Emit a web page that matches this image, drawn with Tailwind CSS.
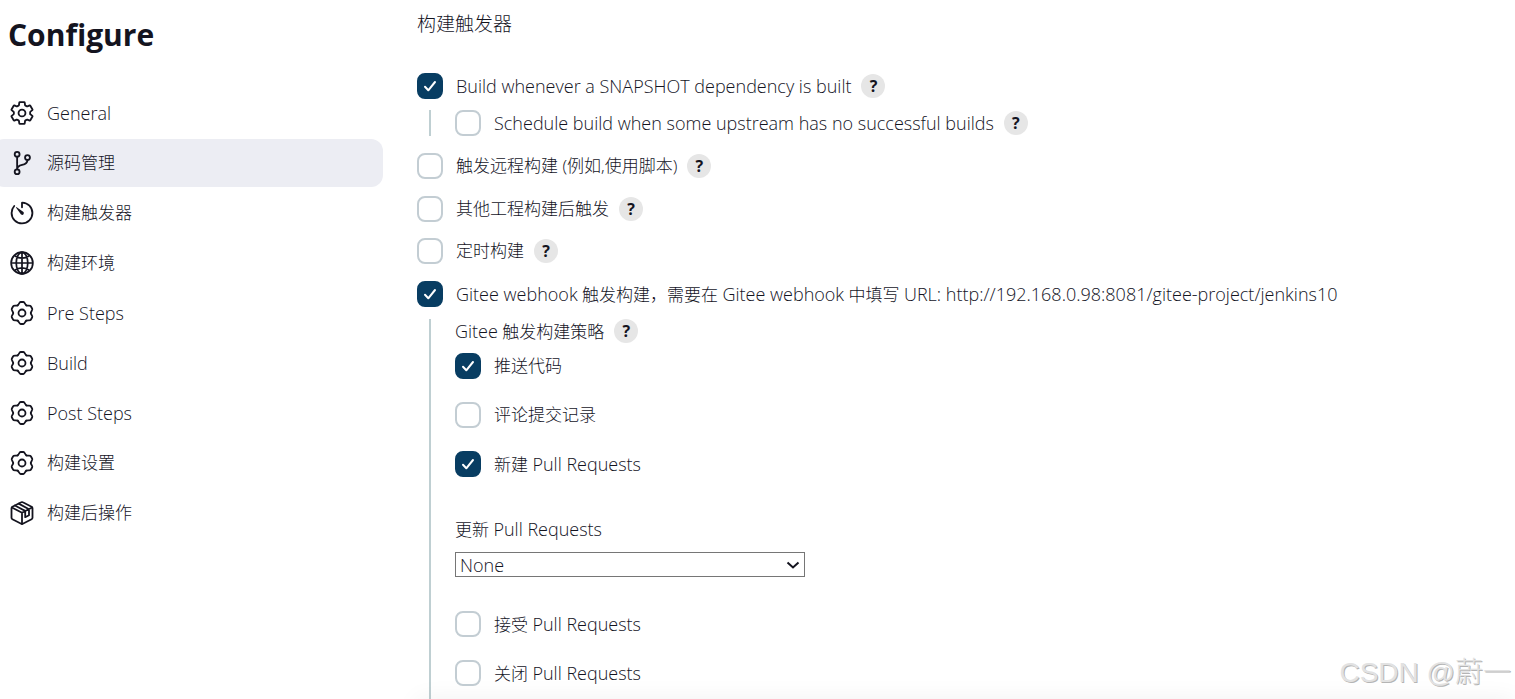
<!DOCTYPE html>
<html lang="zh-CN">
<head>
    <meta charset="UTF-8">
    <meta name="viewport" content="width=device-width, initial-scale=1.0">
    <title>Configure</title>
    <script src="https://cdn.jsdelivr.net/npm/@tailwindcss/browser@4"></script>
</head>
<body class="bg-white text-[#14141f] font-['Open_Sans','Noto_Sans_CJK_SC',sans-serif] text-[17px] leading-6 font-light">

<!-- Icon shapes -->
<svg class="hidden">
    <symbol id="icon-settings" viewBox="0 0 512 512">
        <g fill="none" stroke="currentColor" stroke-width="36" stroke-linecap="round" stroke-linejoin="round">
            <circle cx="256" cy="256" r="68"/>
            <path d="M416.39 256a154.34 154.34 0 01-1.53 20.79l45.21 35.46a10.81 10.81 0 012.45 13.75l-42.77 74a10.81 10.81 0 01-13.14 4.59l-44.9-18.08a16.11 16.11 0 00-15.17 1.75A164.48 164.48 0 01325 400.8a15.94 15.94 0 00-8.82 12.14l-6.73 47.89a11.08 11.08 0 01-10.68 9.17h-85.54a11.11 11.11 0 01-10.69-8.87l-6.72-47.82a16.07 16.07 0 00-9-12.22 155.3 155.3 0 01-21.46-12.57 16 16 0 00-15.11-1.71l-44.89 18.07a10.81 10.81 0 01-13.14-4.58l-42.77-74a10.8 10.8 0 012.45-13.75l38.21-30a16.05 16.05 0 006-14.08c-.36-4.17-.58-8.33-.58-12.5s.21-8.27.58-12.35a16 16 0 00-6.07-13.94l-38.19-30A10.81 10.81 0 0149.48 186l42.77-74a10.81 10.81 0 0113.14-4.59l44.9 18.08a16.11 16.11 0 0015.17-1.75A164.48 164.48 0 01187 111.2a15.94 15.94 0 008.82-12.14l6.73-47.89A11.08 11.08 0 01213.23 42h85.54a11.11 11.11 0 0110.69 8.87l6.72 47.82a16.07 16.07 0 009 12.22 155.3 155.3 0 0121.46 12.57 16 16 0 0015.11 1.71l44.89-18.07a10.81 10.81 0 0113.14 4.58l42.77 74a10.8 10.8 0 01-2.45 13.75l-38.21 30a16.05 16.05 0 00-6.05 14.08c.33 4.14.55 8.3.55 12.47z"/>
        </g>
    </symbol>
    <symbol id="icon-gear" viewBox="0 0 26 26">
        <g fill="none" stroke="currentColor" stroke-width="1.8" stroke-linecap="round" stroke-linejoin="round">
            <circle cx="13" cy="13" r="3.5"/>
            <path d="M8.6 5.400C10 4.600 10.200 2 11.600 2h2.800C15.800 2 16 4.600 17.400 5.400"/>
            <path transform="rotate(60 13 13)" d="M8.6 5.400C10 4.600 10.200 2 11.600 2h2.800C15.800 2 16 4.600 17.400 5.400"/>
            <path transform="rotate(120 13 13)" d="M8.6 5.400C10 4.600 10.200 2 11.600 2h2.800C15.800 2 16 4.600 17.400 5.400"/>
            <path transform="rotate(180 13 13)" d="M8.6 5.400C10 4.600 10.200 2 11.600 2h2.800C15.800 2 16 4.600 17.400 5.400"/>
            <path transform="rotate(240 13 13)" d="M8.6 5.400C10 4.600 10.200 2 11.600 2h2.800C15.800 2 16 4.600 17.400 5.400"/>
            <path transform="rotate(300 13 13)" d="M8.6 5.400C10 4.600 10.200 2 11.600 2h2.800C15.800 2 16 4.600 17.400 5.400"/>
        </g>
    </symbol>
    <symbol id="icon-branch" viewBox="0 0 512 512">
        <g fill="none" stroke="currentColor" stroke-width="36" stroke-linecap="round" stroke-linejoin="round">
            <circle cx="160" cy="84" r="48"/>
            <circle cx="160" cy="428" r="48"/>
            <circle cx="364" cy="148" r="48"/>
            <path d="M160 380V132M364 196c0 140-204 58-204 184"/>
        </g>
    </symbol>
    <symbol id="icon-timer" viewBox="0 0 512 512">
        <path fill="none" stroke="currentColor" stroke-width="36" stroke-linecap="round" stroke-linejoin="round" d="M103 118A205 205 0 0051 254c-1 114 91 207 205 207 113 0 205-92 205-205 0-112-89-203-200-205a5 5 0 00-5 5V145"/>
        <path fill="currentColor" d="M233.380 278.630l-93-127a8.130 8.130 0 0111.320-11.320l127 93a32.500 32.500 0 01-37.250 53.260 33.210 33.210 0 01-8.070-7.940z"/>
    </symbol>
    <symbol id="icon-globe" viewBox="0 0 512 512">
        <g fill="none" stroke="currentColor" stroke-width="34">
            <circle cx="256" cy="256" r="214"/>
            <path d="M256 42c-60 0-114 96-114 214s54 214 114 214 114-96 114-214S316 42 256 42zM113 113c38 28 89 46 143 46s105-18 143-46M399 399c-38-28-89-46-143-46s-105 18-143 46M256 42v428M42 256h428"/>
        </g>
    </symbol>
    <symbol id="icon-package" viewBox="0 0 26 26">
        <g fill="none" stroke="currentColor" stroke-width="1.8" stroke-linecap="round" stroke-linejoin="round">
            <path d="M12.200 2.300a1.600 1.600 0 011.600 0l8.800 4.500c.5.300.9.800.9 1.400v9.600c0 .6-.3 1.100-.9 1.400l-8.800 4.500a1.600 1.600 0 01-1.600 0l-8.800-4.500c-.5-.3-.9-.8-.9-1.400V8.200c0-.6.300-1.100.9-1.400z"/>
            <path d="M2.900 7.500L13 12.800l10.100-5.300M13 12.800V24M5.900 5.500l10.300 5.400v6.300l3.800-2V9.200L9.700 3.600"/>
        </g>
    </symbol>
</svg>

<div class="relative flex min-h-screen overflow-hidden">
    <!-- Sidebar -->
    <aside class="w-[383px] shrink-0 pt-[17px]">
        <h1 class="pl-2 text-[30px] leading-9 font-bold">Configure</h1>
        <nav class="-ml-2 mt-9 flex flex-col gap-[2px]">
            <a href="#general" class="flex h-12 items-center gap-3 rounded-xl pl-[17px] text-lg">
                <svg class="size-[26px]"><use href="#icon-settings"/></svg>General</a>
            <a href="#scm" class="flex h-12 items-center gap-3 rounded-xl bg-[#ecedf3] pl-[17px]">
                <svg class="size-[26px]"><use href="#icon-branch"/></svg>源码管理</a>
            <a href="#triggers" class="flex h-12 items-center gap-3 rounded-xl pl-[17px]">
                <svg class="size-[26px]"><use href="#icon-timer"/></svg>构建触发器</a>
            <a href="#environment" class="flex h-12 items-center gap-3 rounded-xl pl-[17px]">
                <svg class="size-[26px]"><use href="#icon-globe"/></svg>构建环境</a>
            <a href="#pre-steps" class="flex h-12 items-center gap-3 rounded-xl pl-[17px] text-lg">
                <svg class="size-[26px]"><use href="#icon-gear"/></svg>Pre Steps</a>
            <a href="#build" class="flex h-12 items-center gap-3 rounded-xl pl-[17px] text-lg">
                <svg class="size-[26px]"><use href="#icon-gear"/></svg>Build</a>
            <a href="#post-steps" class="flex h-12 items-center gap-3 rounded-xl pl-[17px] text-lg">
                <svg class="size-[26px]"><use href="#icon-gear"/></svg>Post Steps</a>
            <a href="#settings" class="flex h-12 items-center gap-3 rounded-xl pl-[17px]">
                <svg class="size-[26px]"><use href="#icon-gear"/></svg>构建设置</a>
            <a href="#post-build" class="flex h-12 items-center gap-3 rounded-xl pl-[17px]">
                <svg class="size-[26px]"><use href="#icon-package"/></svg>构建后操作</a>
        </nav>
    </aside>

    <!-- Build triggers -->
    <main class="flex min-w-0 flex-1 flex-col pl-[34px] pt-3">
        <h2 id="triggers" class="mb-[37px] text-[19px] leading-6">构建触发器</h2>

        <div class="flex h-[26px] items-center gap-[10px]">
            <label class="flex items-center gap-[13px] text-lg leading-6">
                <span class="grid size-[26px] shrink-0">
                    <input type="checkbox" checked class="peer col-start-1 row-start-1 size-[26px] appearance-none rounded-lg border-2 border-[#c3cdd3] checked:border-[#083d62] checked:bg-[#083d62]">
                    <svg class="pointer-events-none invisible col-start-1 row-start-1 size-[26px] text-white peer-checked:visible" viewBox="0 0 26 26" fill="none" stroke="currentColor" stroke-width="2" stroke-linecap="round" stroke-linejoin="round"><path d="M8 13.800l3.300 3.500L18 9"/></svg>
                </span>
                Build whenever a SNAPSHOT dependency is built
            </label>
            <button type="button" class="size-6 rounded-full bg-[#e6e6e6] text-base leading-6 font-bold">?</button>
        </div>

        <div class="ml-3 mt-[11px] border-l-2 border-[#bfcfd2] pl-6">
            <div class="flex h-[26px] items-center gap-[10px]">
                <label class="flex items-center gap-[13px] text-lg leading-6">
                    <input type="checkbox" class="size-[26px] shrink-0 appearance-none rounded-lg border-2 border-[#c3cdd3]">
                    Schedule build when some upstream has no successful builds
                </label>
                <button type="button" class="size-6 rounded-full bg-[#e6e6e6] text-base leading-6 font-bold">?</button>
            </div>
        </div>

        <div class="mt-[17px] flex h-[26px] items-center gap-[10px]">
            <label class="flex items-center gap-[13px]">
                <input type="checkbox" class="size-[26px] shrink-0 appearance-none rounded-lg border-2 border-[#c3cdd3]">
                触发远程构建 (例如,使用脚本)
            </label>
            <button type="button" class="size-6 rounded-full bg-[#e6e6e6] text-base leading-6 font-bold">?</button>
        </div>

        <div class="mt-[17px] flex h-[26px] items-center gap-[10px]">
            <label class="flex items-center gap-[13px]">
                <input type="checkbox" class="size-[26px] shrink-0 appearance-none rounded-lg border-2 border-[#c3cdd3]">
                其他工程构建后触发
            </label>
            <button type="button" class="size-6 rounded-full bg-[#e6e6e6] text-base leading-6 font-bold">?</button>
        </div>

        <div class="mt-4 flex h-[26px] items-center gap-[10px]">
            <label class="flex items-center gap-[13px]">
                <input type="checkbox" class="size-[26px] shrink-0 appearance-none rounded-lg border-2 border-[#c3cdd3]">
                定时构建
            </label>
            <button type="button" class="size-6 rounded-full bg-[#e6e6e6] text-base leading-6 font-bold">?</button>
        </div>

        <label class="mt-[17px] flex h-[26px] items-center gap-[13px]">
            <span class="grid size-[26px] shrink-0">
                <input type="checkbox" checked class="peer col-start-1 row-start-1 size-[26px] appearance-none rounded-lg border-2 border-[#c3cdd3] checked:border-[#083d62] checked:bg-[#083d62]">
                <svg class="pointer-events-none invisible col-start-1 row-start-1 size-[26px] text-white peer-checked:visible" viewBox="0 0 26 26" fill="none" stroke="currentColor" stroke-width="2" stroke-linecap="round" stroke-linejoin="round"><path d="M8 13.800l3.300 3.500L18 9"/></svg>
            </span>
            <span><span class="text-lg leading-6">Gitee webhook</span> 触发构建，需要在 <span class="text-lg leading-6">Gitee webhook</span> 中填写 <span class="text-lg leading-6">URL: http://192.168.0.98:8081/gitee-project/jenkins10</span></span>
        </label>

        <!-- Gitee trigger options -->
        <div class="ml-3 mt-3 flex-1 border-l-2 border-[#bfcfd2] pl-6">
            <div class="flex h-6 items-center gap-[10px]">
                <span><span class="text-lg leading-6">Gitee</span> 触发构建策略</span>
                <button type="button" class="size-6 rounded-full bg-[#e6e6e6] text-base leading-6 font-bold">?</button>
            </div>

            <div class="mt-[10px] flex flex-col gap-[23px]">
                <label class="flex h-[26px] items-center gap-[13px]">
                    <span class="grid size-[26px] shrink-0">
                        <input type="checkbox" checked class="peer col-start-1 row-start-1 size-[26px] appearance-none rounded-lg border-2 border-[#c3cdd3] checked:border-[#083d62] checked:bg-[#083d62]">
                        <svg class="pointer-events-none invisible col-start-1 row-start-1 size-[26px] text-white peer-checked:visible" viewBox="0 0 26 26" fill="none" stroke="currentColor" stroke-width="2" stroke-linecap="round" stroke-linejoin="round"><path d="M8 13.800l3.300 3.500L18 9"/></svg>
                    </span>
                    推送代码
                </label>
                <label class="flex h-[26px] items-center gap-[13px]">
                    <input type="checkbox" class="size-[26px] shrink-0 appearance-none rounded-lg border-2 border-[#c3cdd3]">
                    评论提交记录
                </label>
                <label class="flex h-[26px] items-center gap-[13px]">
                    <span class="grid size-[26px] shrink-0">
                        <input type="checkbox" checked class="peer col-start-1 row-start-1 size-[26px] appearance-none rounded-lg border-2 border-[#c3cdd3] checked:border-[#083d62] checked:bg-[#083d62]">
                        <svg class="pointer-events-none invisible col-start-1 row-start-1 size-[26px] text-white peer-checked:visible" viewBox="0 0 26 26" fill="none" stroke="currentColor" stroke-width="2" stroke-linecap="round" stroke-linejoin="round"><path d="M8 13.800l3.300 3.500L18 9"/></svg>
                    </span>
                    <span>新建 <span class="text-lg leading-6">Pull Requests</span></span>
                </label>
            </div>

            <div class="mt-10 flex flex-col gap-[10px]">
                <label for="updatePullRequests">更新 <span class="text-lg leading-6">Pull Requests</span></label>
                <div class="grid w-[350px] max-w-full items-center">
                    <select id="updatePullRequests" class="col-start-1 row-start-1 h-[25px] w-full appearance-none border border-[#767676] bg-white pl-1 text-lg leading-[22px]">
                        <option>None</option>
                    </select>
                    <svg class="pointer-events-none col-start-1 row-start-1 mr-[5px] h-3 w-[14px] justify-self-end" viewBox="0 0 14 12" fill="none" stroke="currentColor" stroke-width="2"><path d="M1.500 3.500L7 8.500l5.500-5"/></svg>
                </div>
            </div>

            <div class="mt-[34px] flex flex-col gap-[23px]">
                <label class="flex h-[26px] items-center gap-[13px]">
                    <input type="checkbox" class="size-[26px] shrink-0 appearance-none rounded-lg border-2 border-[#c3cdd3]">
                    <span>接受 <span class="text-lg leading-6">Pull Requests</span></span>
                </label>
                <label class="flex h-[26px] items-center gap-[13px]">
                    <input type="checkbox" class="size-[26px] shrink-0 appearance-none rounded-lg border-2 border-[#c3cdd3]">
                    <span>关闭 <span class="text-lg leading-6">Pull Requests</span></span>
                </label>
            </div>
        </div>
    </main>

    <!-- Bottom bar shadow and watermark -->
    <div class="pointer-events-none absolute right-0 -bottom-10 left-[417px] h-10 shadow-[0_0_24px_rgba(0,0,0,0.06)]"></div>
    <div class="absolute right-1 bottom-2 font-['Liberation_Sans','Noto_Sans_CJK_SC',sans-serif] text-[28px] leading-9 font-light text-[#e2e2e2] [text-shadow:1px_1px_0_#b4b4b4]">CSDN @蔚一</div>
</div>

</body>
</html>
